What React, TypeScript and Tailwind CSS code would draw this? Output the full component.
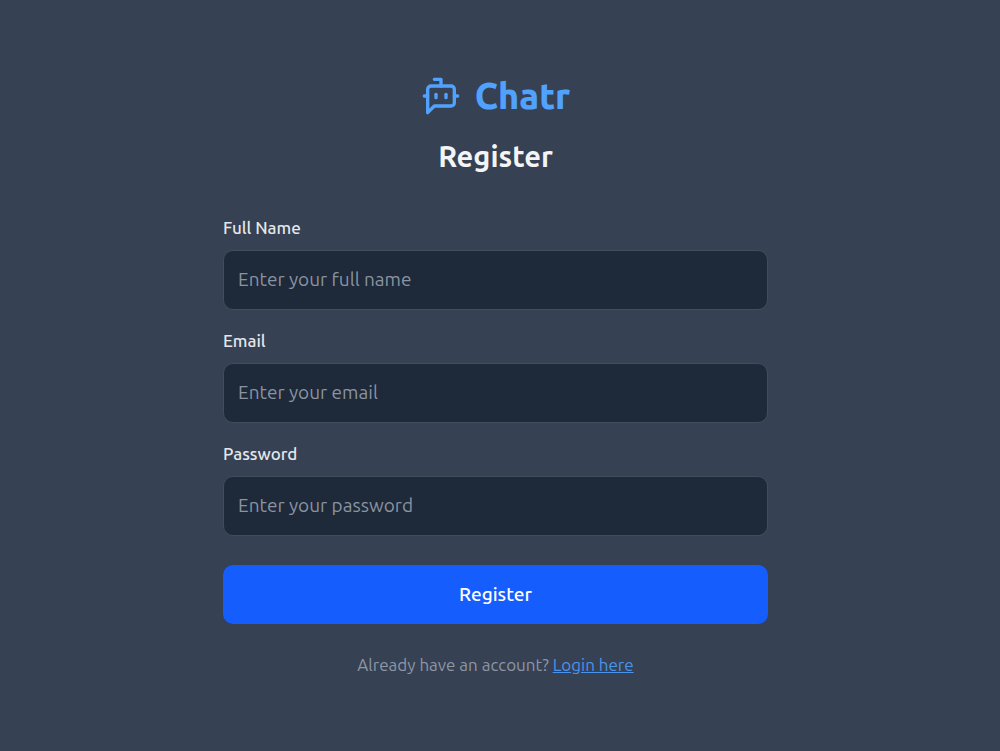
import { useState } from "react";

function BotIcon() {
  return (
    <svg
      className="size-10 shrink-0"
      viewBox="0 0 24 24"
      fill="none"
      stroke="currentColor"
      strokeWidth="2"
      strokeLinecap="round"
      strokeLinejoin="round"
      aria-hidden="true"
    >
      <path d="M12 6V2H8" />
      <path d="m8 18-4 4V8a2 2 0 0 1 2-2h12a2 2 0 0 1 2 2v8a2 2 0 0 1-2 2Z" />
      <path d="M2 12h2" />
      <path d="M9 11v2" />
      <path d="M15 11v2" />
      <path d="M20 12h2" />
    </svg>
  );
}

type FieldProps = {
  id: string;
  label: string;
  type: string;
  placeholder: string;
};

function Field({ id, label, type, placeholder }: FieldProps) {
  const [value, setValue] = useState("");
  return (
    <div className="flex flex-col gap-2.5">
      <label htmlFor={id} className="text-[17px]/6 font-medium text-gray-200">
        {label}
      </label>
      <input
        id={id}
        name={id}
        type={type}
        value={value}
        onChange={(e) => setValue(e.target.value)}
        placeholder={placeholder}
        className="h-[60px] w-full rounded-[10px] border border-[#414c5c] bg-gray-800 px-3.5 pb-0.5 text-[19px] text-white placeholder:text-[#8a93a1] focus:border-blue-500 focus:outline-none"
      />
    </div>
  );
}

export default function App() {
  return (
    <main className="flex min-h-screen flex-col items-center bg-gray-700 pt-[72px] pr-[9px] pb-10 font-['Ubuntu','Noto_Sans',sans-serif]">
      <div className="flex w-full max-w-[545px] flex-col">
        <div className="flex items-center justify-center gap-3.5 text-blue-400">
          <BotIcon />
          <span className="text-4xl/12 font-extrabold">Chatr</span>
        </div>
        <h1 className="mt-4 text-center text-[29px]/10 font-semibold text-gray-100">
          Register
        </h1>
        <form
          className="mt-10 flex flex-col"
          onSubmit={(e) => e.preventDefault()}
        >
          <div className="flex flex-col gap-[19px]">
            <Field
              id="fullName"
              label="Full Name"
              type="text"
              placeholder="Enter your full name"
            />
            <Field
              id="email"
              label="Email"
              type="email"
              placeholder="Enter your email"
            />
            <Field
              id="password"
              label="Password"
              type="password"
              placeholder="Enter your password"
            />
          </div>
          <button
            type="submit"
            className="mt-[29px] h-[59px] w-full cursor-pointer rounded-[10px] bg-blue-600 text-[19px] font-medium text-white hover:bg-blue-700"
          >
            Register
          </button>
        </form>
        <p className="mt-[27px] text-center text-[17px]/7 text-[#8d96a5]">
          Already have an account?{" "}
          <a href="#login" className="text-[#4a93ea] underline">
            Login here
          </a>
        </p>
      </div>
    </main>
  );
}
